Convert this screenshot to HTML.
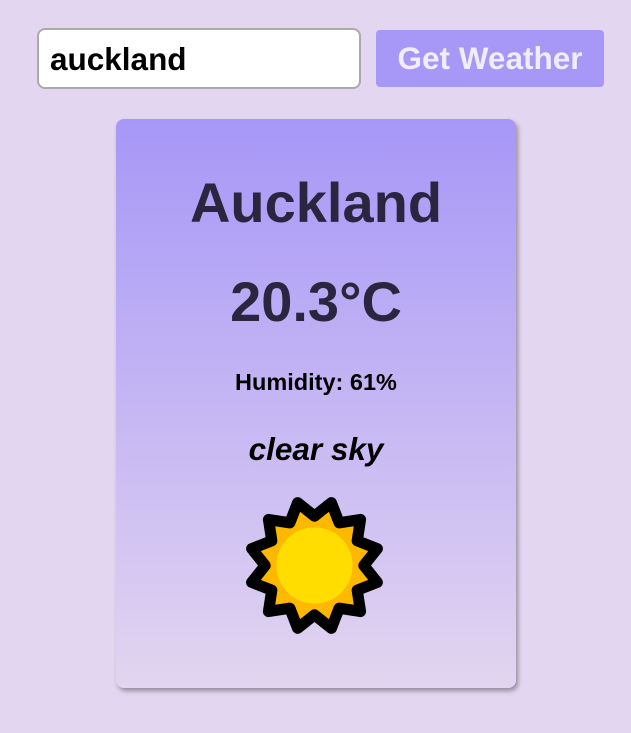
<!DOCTYPE html>
<html><head><meta charset="utf-8"><style>
body{margin:0;width:631px;height:733px;background:#e3d6f0;font-family:"Liberation Sans",Arial,sans-serif;position:relative;overflow:hidden}
.inp{position:absolute;left:37px;top:28px;width:320px;height:57px;border:2px solid #aaa;border-radius:8px;background:#fff;box-sizing:content-box}
.inp span{position:absolute;left:11px;top:11px;font-size:31.5px;font-weight:bold;color:#000}
.btn{position:absolute;left:376px;top:30px;width:228px;height:57px;background:#a797f7;border-radius:4px;color:#f2ecfd;font-size:31.5px;font-weight:bold;text-align:center;line-height:57px}
.card{position:absolute;left:116px;top:119px;width:400px;height:569px;border-radius:8px;background:linear-gradient(#a797f7,#e2d5f0);box-shadow:2px 3px 5px rgba(0,0,0,.35);text-align:center;color:#2b2640}
.t{position:absolute;left:0;right:0;font-weight:bold}
</style></head><body>
<div class="inp"><span>auckland</span></div>
<div class="btn">Get Weather</div>
<div class="card">
<div class="t" style="top:51px;font-size:56px">Auckland</div>
<div class="t" style="top:150px;font-size:56px">20.3°C</div>
<div class="t" style="top:250px;font-size:23.5px;color:#000">Humidity: 61%</div>
<div class="t" style="top:312px;font-size:31.5px;font-style:italic;color:#000">clear sky</div>
<svg style="position:absolute;left:120px;top:368px" width="157" height="157" viewBox="-70 -70 140 140">
<polygon points="44,0 56,15 38.1,22 41,41 22,38.1 15,56 0,44 -15,56 -22,38.1 -41,41 -38.1,22 -56,15 -44,0 -56,-15 -38.1,-22 -41,-41 -22,-38.1 -15,-56 0,-44 15,-56 22,-38.1 41,-41 38.1,-22 56,-15" fill="#ffb800" stroke="#000" stroke-width="10" stroke-linejoin="round"/>
<circle r="34" fill="#ffdd00"/>
</svg>
</div>
</body></html>
